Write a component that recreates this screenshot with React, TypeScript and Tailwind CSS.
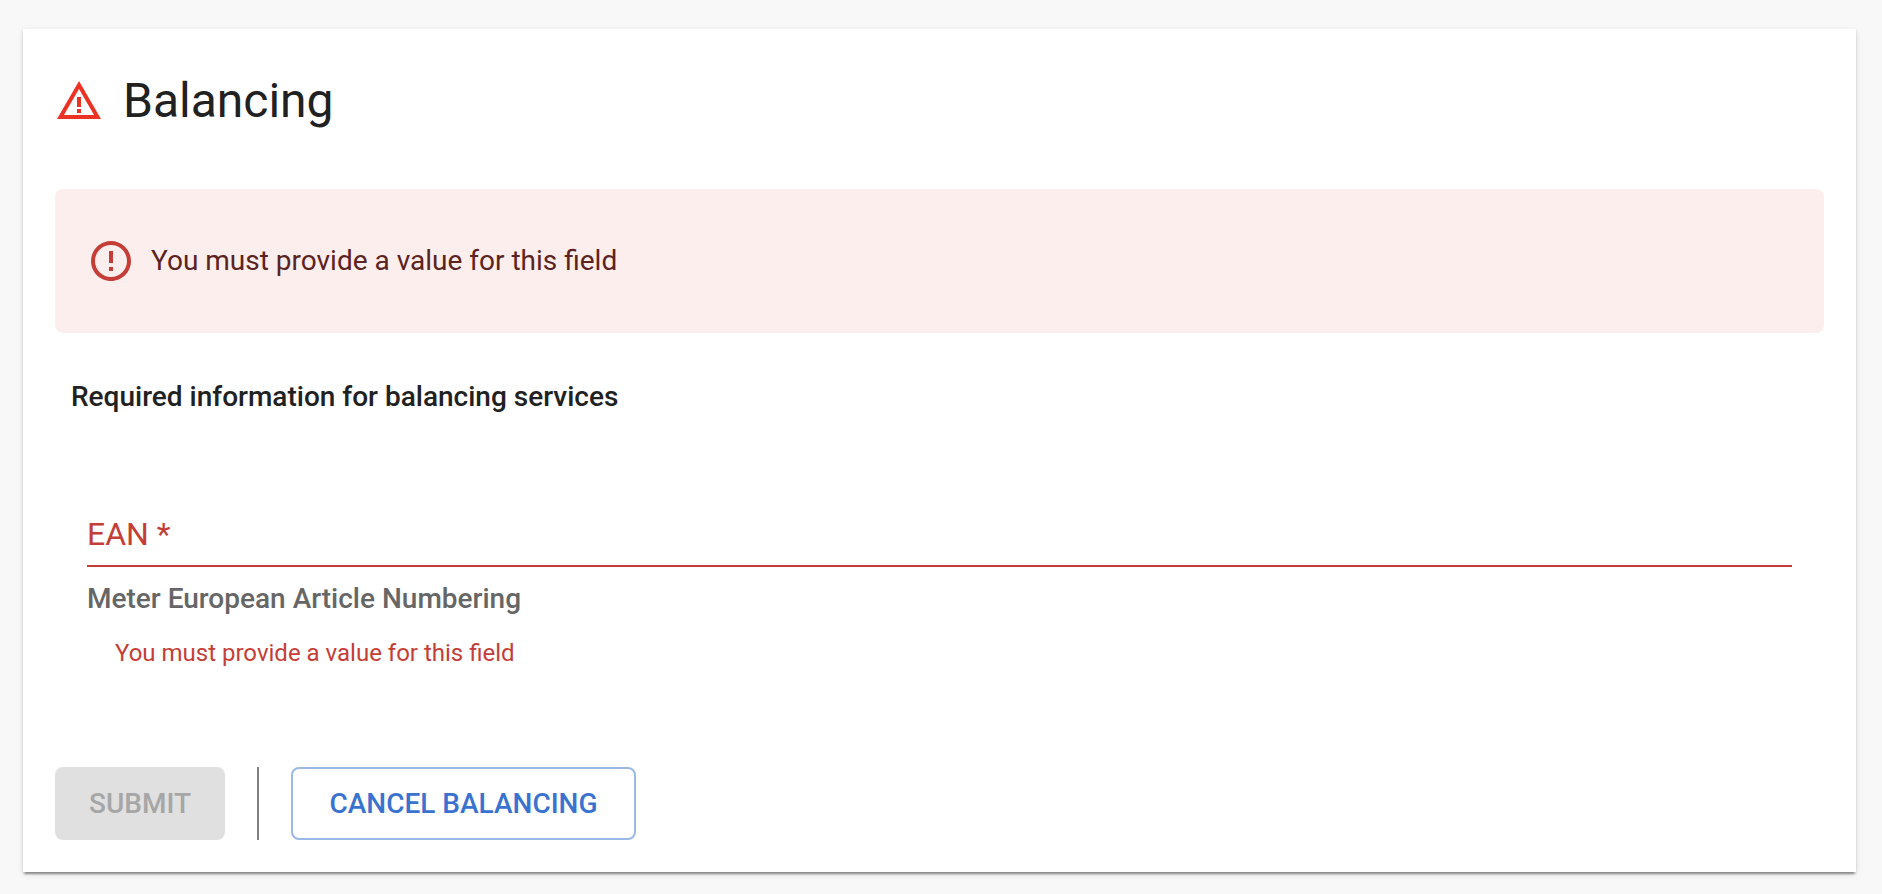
import { useState } from 'react';

const REQUIRED_MESSAGE = 'You must provide a value for this field';

const WarningIcon = () => (
  <svg viewBox="0 0 24 24" className="size-12 shrink-0 fill-[#ec3323]" aria-hidden="true">
    <path d="M12 5.99L19.53 19H4.47L12 5.99M12 2L1 21h22L12 2zm1 14h-2v2h2v-2zm0-6h-2v5h2v-5z" />
  </svg>
);

const ErrorIcon = () => (
  <svg viewBox="0 0 24 24" className="size-12 shrink-0 fill-[#c43e37]" aria-hidden="true">
    <path d="M11 15h2v2h-2v-2zm0-8h2v6h-2V7zm.99-5C6.47 2 2 6.48 2 12s4.47 10 9.99 10C17.52 22 22 17.52 22 12S17.52 2 11.99 2zM12 20c-4.42 0-8-3.58-8-8s3.58-8 8-8 8 3.58 8 8-3.58 8-8 8z" />
  </svg>
);

const App = () => {
  const [ean, setEan] = useState('');
  const hasError = ean.trim() === '';

  return (
    <main className="min-h-screen bg-[#f8f8f8] pt-[29px] pr-[26px] pb-[22px] pl-[23px] font-['Roboto',sans-serif] text-[#212121]">
      <form
        noValidate
        onSubmit={(e) => e.preventDefault()}
        className="bg-white p-8 shadow-[0_4px_2px_-2px_rgba(0,0,0,0.3),0_2px_2px_0_rgba(0,0,0,0.14),0_2px_6px_0_rgba(0,0,0,0.12)]"
      >
        <div className="flex items-center gap-5">
          <WarningIcon />
          <h1 className="text-5xl leading-20">Balancing</h1>
        </div>

        {hasError && (
          <div role="alert" className="mt-12 flex h-36 items-center gap-4 rounded-lg bg-[#fceeec] px-8 text-[#5b2321]">
            <ErrorIcon />
            <p className="text-[28px] leading-10">{REQUIRED_MESSAGE}</p>
          </div>
        )}

        <div className="mt-10 px-4">
          <h2 className="text-[28px] leading-12 font-medium">Required information for balancing services</h2>

          <div className="mt-20 px-4">
            <div className="relative">
              <input
                id="ean"
                type="text"
                required
                value={ean}
                onChange={(e) => setEan(e.target.value)}
                aria-invalid={hasError}
                aria-describedby="ean-help ean-error"
                placeholder=" "
                className="peer block h-[66px] w-full border-b-2 border-[#c43e37] bg-transparent text-[32px] outline-none"
              />
              <label
                htmlFor="ean"
                className="pointer-events-none absolute top-0 left-0 text-[32px] leading-[66px] text-[#c43e37] peer-[:not(:placeholder-shown)]:hidden"
              >
                EAN *
              </label>
            </div>
            <p id="ean-help" className="mt-3 text-[28px] leading-10 font-medium text-[#666666]">
              Meter European Article Numbering
            </p>
            <p id="ean-error" className="mt-3.5 px-7 text-2xl leading-10 text-[#c43e37]">
              {hasError ? REQUIRED_MESSAGE : ''}
            </p>
          </div>
        </div>

        <div className="mt-[94px] flex gap-8">
          <button
            type="submit"
            disabled={hasError}
            className="min-w-[170px] rounded-lg bg-[#3a73cf] px-8 py-3 text-[28px] leading-[49px] font-medium text-white uppercase disabled:bg-[#e0e0e0] disabled:text-[#a6a6a6]"
          >
            Submit
          </button>
          <div className="w-0.5 bg-[#808080]"></div>
          <button
            type="button"
            onClick={() => setEan('')}
            className="min-w-[345px] rounded-lg border-2 border-[#9ab9e7] px-[30px] py-[10px] text-[28px] leading-[49px] font-medium text-[#3a73cf] uppercase"
          >
            Cancel balancing
          </button>
        </div>
      </form>
    </main>
  );
};

export default App;
